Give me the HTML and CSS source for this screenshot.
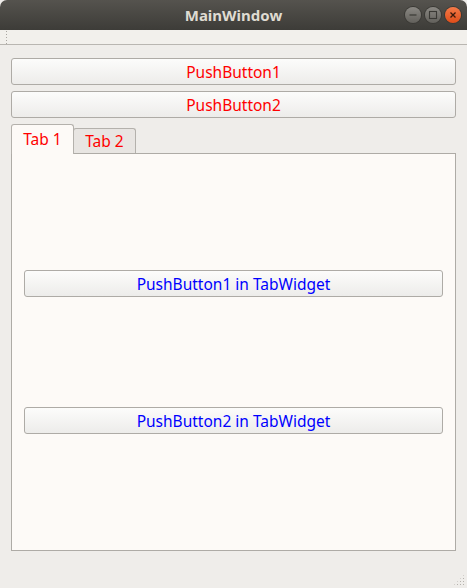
FILE: index.html
```html
<!DOCTYPE html>
<html>
    <head>
        <title>MainWindow</title>
        <link rel="stylesheet" href="styles.css">
    </head>
    <body>
        <div class="window">
            <div class="titlebar">
                <span class="title">MainWindow</span>
                <div class="controls">
                    <span class="ctl min"><svg width="16" height="16" viewBox="0 0 16 16"><line x1="4.5" y1="8" x2="11.5" y2="8" stroke="#3a3935" stroke-width="1.2"/></svg></span>
                    <span class="ctl max"><svg width="16" height="16" viewBox="0 0 16 16"><rect x="4.5" y="4.5" width="7" height="7" fill="none" stroke="#3a3935" stroke-width="1.1"/></svg></span>
                    <span class="ctl close"><svg width="16" height="16" viewBox="0 0 16 16"><path d="M5.5 5.5 L10.5 10.5 M10.5 5.5 L5.5 10.5" stroke="#3a1a0c" stroke-width="1.3"/></svg></span>
                </div>
            </div>

            <div class="toolbar">
                <span class="handle"></span>
            </div>

            <div class="central">
                <button class="push red">PushButton1</button>
                <button class="push red">PushButton2</button>

                <div class="tabs">
                    <div class="tabbar">
                        <span class="tab active">Tab 1</span>
                        <span class="tab">Tab 2</span>
                    </div>
                    <div class="pane">
                        <button class="push blue">PushButton1 in TabWidget</button>
                        <button class="push blue second">PushButton2 in TabWidget</button>
                    </div>
                </div>
            </div>

            <div class="statusbar">
                <span class="grip"></span>
            </div>
        </div>
    </body>
</html>
```

FILE: styles.css
```css
*{
    box-sizing: border-box;
}
body{
    margin: 0;
    background-color: #edebe7;
    font-family: "Noto Sans", "DejaVu Sans", sans-serif;
}
.window{
    width: 467px;
    height: 588px;
    display: flex;
    flex-direction: column;
    background-color: #efedea;
    overflow: hidden;
}
.titlebar{
    flex-shrink: 0;
    height: 30px;
    border-radius: 7px 7px 0 0;
    background: linear-gradient(#55534e, #3d3c38);
    display: flex;
    align-items: center;
    justify-content: center;
    position: relative;
}
.title{
    color: #dfdbd2;
    font-weight: bold;
    font-size: 15px;
}
.controls{
    position: absolute;
    right: 6px;
    top: 7px;
    display: flex;
    gap: 4px;
}
.ctl{
    width: 16px;
    height: 16px;
    border-radius: 50%;
    display: flex;
    align-items: center;
    justify-content: center;
    background: linear-gradient(#8a8883, #62605b);
    box-shadow: 0 0 0 1px #3a3935;
}
.ctl.close{
    background: linear-gradient(#f47a48, #df4d19);
}
.toolbar{
    flex-shrink: 0;
    height: 15px;
    background-color: #f2f0ec;
    border-bottom: 1px solid #b9b6b1;
    padding-left: 5px;
}
.handle{
    display: block;
    width: 4px;
    height: 14px;
    background-image: radial-gradient(#a8a5a0 0.8px, transparent 1px);
    background-size: 3px 3px;
}
.central{
    flex-shrink: 0;
    padding: 13px 11px 0 11px;
    display: flex;
    flex-direction: column;
    gap: 6px;
}
.push{
    flex-shrink: 0;
    height: 27px;
    width: 100%;
    border: 1px solid #aeaba6;
    border-radius: 3px;
    background: linear-gradient(#fcfcfb, #edecea);
    font-family: "Noto Sans", "DejaVu Sans", sans-serif;
    font-size: 15.5px;
    padding: 0;
}
.red{
    color: #ff0000;
}
.blue{
    color: #0000ff;
}
.tabbar{
    display: flex;
    align-items: flex-end;
    height: 29px;
}
.tab{
    height: 25px;
    width: 63px;
    display: flex;
    align-items: center;
    justify-content: center;
    color: #ff0000;
    font-size: 15.5px;
    border: 1px solid #b4b1ac;
    border-bottom: none;
    border-radius: 3px 3px 0 0;
    background-color: #e8e5e2;
    margin-left: -1px;
}
.tab.active{
    margin-left: 0;
    background-color: #fdfaf7;
    position: relative;
    z-index: 1;
    margin-bottom: -1px;
    height: 30px;
    padding-bottom: 1px;
}
.pane{
    height: 398px;
    border: 1px solid #aeaba6;
    background-color: #fdfaf7;
    padding: 116px 12px 0 12px;
    display: flex;
    flex-direction: column;
}
.pane .second{
    margin-top: 110px;
}
.statusbar{
    flex: 1;
    display: flex;
    justify-content: flex-end;
    align-items: flex-end;
}
.grip{
    width: 12px;
    height: 12px;
    margin: 0 2px 2px 0;
    background-image: radial-gradient(#b5b2ad 0.8px, transparent 1px);
    background-size: 3px 3px;
    clip-path: polygon(100% 0, 100% 100%, 0 100%);
}
```
